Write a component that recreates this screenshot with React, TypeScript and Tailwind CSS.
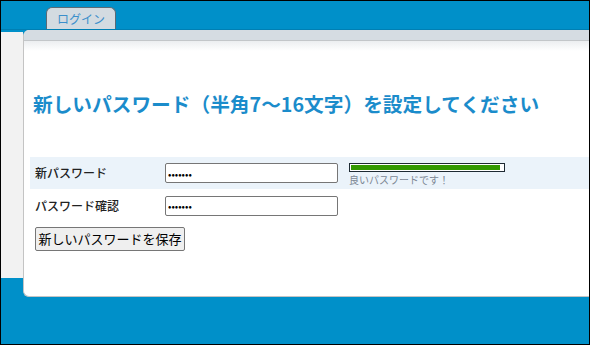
import React from 'react'

/* ─── Password change screen ─── */
export default function App() {
  return (
    <div
      className="flex h-[345px] w-[590px] flex-col overflow-hidden border border-black bg-[#0090c9]"
      style={{ fontFamily: '"Noto Sans CJK JP", "Noto Sans", sans-serif' }}
    >
      {/* Top bar with tab */}
      <div className="flex h-[29px] shrink-0 items-end border-b border-[#007fb3] bg-[#0090c9] pl-[45px]">
        <div className="flex h-[22px] w-[70px] items-center justify-center rounded-t-[6px] border-x border-t border-[#5b6a75] bg-[#d3dbe1] text-[12px] text-[#3b8fcb]">
          ログイン
        </div>
      </div>

      {/* Body */}
      <div className="flex h-[267px] shrink-0">
        <div className="mt-[2px] h-[246px] w-[22px] shrink-0 bg-[#f2f2f2]" />
        <div className="flex flex-1 flex-col overflow-hidden rounded-l-[6px] border-b border-l border-[#c4c4c4] bg-white">
          <div className="h-[11px] shrink-0 border-b border-[#c3c6c9] bg-[#d5dce2]" />
          <div className="h-[10px] shrink-0 bg-gradient-to-b from-[#eceef0] to-white" />

          <h1 className="mt-[41px] pl-[9px] text-[19.7px] font-bold leading-[24px] text-[#1b8ccb]">
            新しいパスワード（半角7～16文字）を設定してください
          </h1>

          <div className="mt-[41px] pl-[6px]">
            {/* Row 1 */}
            <div className="flex h-[32px] items-center bg-[#ebf3fa] pl-[5px]">
              <span className="w-[130px] text-[12px] font-medium text-[#222]">新パスワード</span>
              <input
                type="password"
                readOnly
                value="1234567"
                className="h-[20px] w-[173px] rounded-[2px] border border-[#767676] bg-white px-[2px] text-[10px]"
              />
              <div className="ml-[11px] flex flex-col self-start pt-[6px]">
                <div className="h-[9px] w-[156px] border border-[#1e2a33] bg-white p-[1px] pr-[4px]">
                  <div className="h-full w-full bg-[#339900]" />
                </div>
                <span className="mt-[1px] text-[10px] leading-[13px] text-[#7c8794]">良いパスワードです！</span>
              </div>
            </div>

            {/* Row 2 */}
            <div className="flex h-[33px] items-center pl-[5px]">
              <span className="w-[130px] text-[12px] font-medium text-[#222]">パスワード確認</span>
              <input
                type="password"
                readOnly
                value="1234567"
                className="h-[20px] w-[173px] rounded-[2px] border border-[#767676] bg-white px-[2px] text-[10px]"
              />
            </div>

            <button className="ml-[5px] mt-[5px] h-[24px] w-[150px] rounded-[2px] border border-[#767676] bg-[#efefef] text-[13px] text-black">
              新しいパスワードを保存
            </button>
          </div>
        </div>
      </div>

      <div className="flex-1 bg-[#0090c9]" />
    </div>
  )
}
